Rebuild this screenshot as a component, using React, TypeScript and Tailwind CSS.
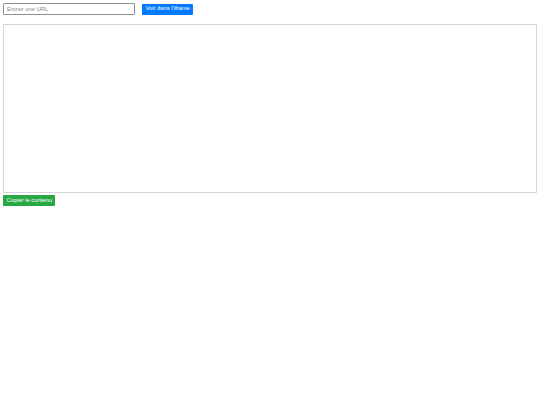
import React, { useState } from 'react';

export default function App() {
  const [url, setUrl] = useState('');

  return (
    <div className="min-h-[405px] bg-white p-[3px] flex flex-col items-start font-['Liberation_Sans',Arial,sans-serif]">
      <div className="flex items-center gap-[7px]">
        <input
          type="text"
          value={url}
          onChange={(e) => setUrl(e.target.value)}
          placeholder="Entrez une URL"
          className="w-[132px] h-[12px] border border-[#8f8f8f] rounded-[1px] px-[3px] text-[5.8px] text-gray-800 placeholder:text-[#8a8a8a] outline-none"
        />
        <button className="h-[11px] px-[3.5px] bg-[#007bff] text-white text-[5.8px] rounded-[1px] leading-none">
          Voir dans l'iframe
        </button>
      </div>
      <div className="mt-[9px] w-[534px] h-[169px] border border-[#d6d6d6]" />
      <button className="mt-[2px] h-[11px] px-[3.5px] bg-[#28a745] text-white text-[5.8px] rounded-[1px] leading-none">
        Copier le contenu
      </button>
    </div>
  );
}
